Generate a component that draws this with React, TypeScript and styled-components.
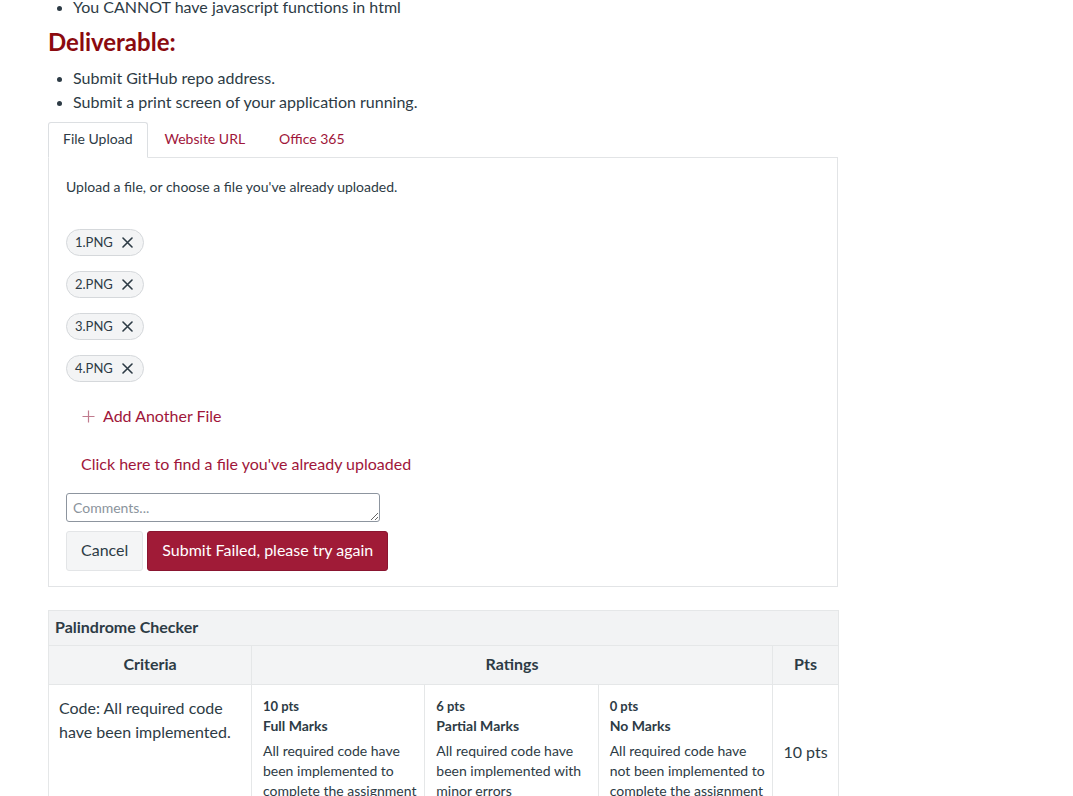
import React from "react";
import styled, { createGlobalStyle } from "styled-components";

const Global = createGlobalStyle`
  html, body { margin: 0; padding: 0; background: #fff; }
  body { font-family: Lato, "Open Sans", sans-serif; color: #2d3b45; overflow: hidden; }
  * { box-sizing: border-box; }
`;

const Page = styled.div`
  padding-left: 48px;
  width: 838px;
  margin-top: -5px;
`;

const Bullets = styled.ul<{ $mt?: number }>`
  margin: ${(p) => p.$mt ?? 0}px 0 0 0;
  padding-left: 25px;
  font-size: 16px;
  line-height: 24px;
  li::marker { font-size: 14px; }
`;

const Heading = styled.h3`
  margin: 8px 0 0 0;
  font-size: 24px;
  line-height: 30px;
  font-weight: 700;
  color: #8b0a0f;
`;

const Tabs = styled.div`
  display: flex;
  margin-top: 8px;
  position: relative;
  z-index: 1;
`;

const Tab = styled.div<{ $active?: boolean }>`
  height: 36px;
  display: flex;
  align-items: center;
  font-size: 14px;
  padding: 0 ${(p) => (p.$active ? 14 : 16)}px 3px;
  border: 1px solid ${(p) => (p.$active ? "#dcdfe2" : "transparent")};
  border-bottom-color: ${(p) => (p.$active ? "#fff" : "transparent")};
  border-radius: 3px 3px 0 0;
  background: ${(p) => (p.$active ? "#fff" : "transparent")};
  color: ${(p) => (p.$active ? "#2d3b45" : "#a0163a")};
`;

const Panel = styled.div`
  margin-top: -1px;
  border: 1px solid #e2e4e6;
  padding: 19px 17px 15px 17px;
`;

const Intro = styled.div`
  font-size: 14px;
  line-height: 20px;
`;

const Chips = styled.div`
  display: flex;
  flex-direction: column;
  align-items: flex-start;
  gap: 15px;
  margin-top: 32px;
`;

const Chip = styled.div`
  height: 27px;
  width: 78px;
  display: flex;
  align-items: center;
  justify-content: space-between;
  padding: 0 10px 0 8px;
  border: 1px solid #d5d8db;
  border-radius: 14px;
  background: #f3f4f5;
  font-size: 13px;
  color: #2d3b45;
  span { margin-top: -2px; }
`;

const LinkRow = styled.div<{ $mt: number; $pl: number }>`
  margin-top: ${(p) => p.$mt}px;
  padding-left: ${(p) => p.$pl}px;
  display: flex;
  align-items: center;
  gap: 8px;
  font-size: 16px;
  line-height: 24px;
  color: #a0163a;
`;

const Comments = styled.textarea`
  display: block;
  margin-top: 17px;
  width: 314px;
  height: 29px;
  border: 1px solid #8d959f;
  border-radius: 3px;
  padding: 4px 6px;
  font-family: Lato, sans-serif;
  font-size: 14px;
  line-height: 19px;
  color: #2d3b45;
  overflow-y: scroll;
  &::placeholder { color: #8b949c; }
`;

const Buttons = styled.div`
  display: flex;
  gap: 4px;
  margin-top: 9px;
`;

const Button = styled.button<{ $primary?: boolean }>`
  height: 40px;
  padding: 0 14px 3px;
  border-radius: 3px;
  border: 1px solid ${(p) => (p.$primary ? "#8a1530" : "#e3e5e7")};
  background: ${(p) => (p.$primary ? "#a01b37" : "#f4f5f6")};
  color: ${(p) => (p.$primary ? "#fff" : "#2d3b45")};
  font-family: Lato, sans-serif;
  font-size: 16px;
`;

const Rubric = styled.table`
  margin-top: 23px;
  width: 790px;
  border-collapse: collapse;
  table-layout: fixed;
  border: 1px solid #e5e7e8;
`;

const Caption = styled.th`
  height: 35px;
  background: #f2f3f4;
  text-align: left;
  padding: 0 6px 3px;
  font-size: 16px;
  font-weight: 700;
  border: 1px solid #e5e7e8;
`;

const HeadCell = styled.th`
  height: 39px;
  background: #f3f4f5;
  font-size: 16px;
  font-weight: 700;
  text-align: center;
  padding: 0 0 3px;
  border: 1px solid #e5e7e8;
`;

const Cell = styled.td<{ $center?: boolean }>`
  border: 1px solid #e5e7e8;
  vertical-align: ${(p) => (p.$center ? "middle" : "top")};
  text-align: ${(p) => (p.$center ? "center" : "left")};
  padding: ${(p) => (p.$center ? "0" : "11px 10px 17px 10px")};
  font-size: 16px;
  line-height: 24px;
`;

const RatingCell = styled.td`
  border: 1px solid #e5e7e8;
  padding: 0;
  vertical-align: top;
`;

const RatingGrid = styled.div`
  display: grid;
  grid-template-columns: 1fr 1fr 1fr;
  height: 100%;
`;

const Rating = styled.div<{ $last?: boolean }>`
  padding: 11px 4px 18px 11px;
  border-right: ${(p) => (p.$last ? "none" : "1px solid #e5e7e8")};
`;

const Points = styled.div`
  font-size: 13px;
  font-weight: 700;
  line-height: 20px;
`;

const RatingTitle = styled.div`
  font-size: 14px;
  font-weight: 700;
  line-height: 20px;
`;

const RatingDesc = styled.div`
  margin-top: 5px;
  font-size: 14px;
  line-height: 20px;
`;

const XIcon = () => (
  <svg width="11" height="11" viewBox="0 0 11 11">
    <path d="M1 1L10 10M10 1L1 10" stroke="#2d3b45" strokeWidth="1.6" strokeLinecap="round" />
  </svg>
);

const PlusIcon = () => (
  <svg width="13" height="13" viewBox="0 0 13 13">
    <path d="M6.5 0.5V12.5M0.5 6.5H12.5" stroke="#c07b8e" strokeWidth="1.2" />
  </svg>
);

const ratings = [
  { pts: "10 pts", title: "Full Marks", desc: "All required code have been implemented to complete the assignment" },
  { pts: "6 pts", title: "Partial Marks", desc: "All required code have been implemented with minor errors" },
  { pts: "0 pts", title: "No Marks", desc: "All required code have not been implemented to complete the assignment" },
];

export default function App() {
  return (
    <>
      <Global />
      <Page>
        <Bullets>
          <li>You CANNOT have javascript functions in html</li>
        </Bullets>
        <Heading>Deliverable:</Heading>
        <Bullets $mt={9}>
          <li>Submit GitHub repo address.</li>
          <li>Submit a print screen of your application running.</li>
        </Bullets>
        <Tabs>
          <Tab $active>File Upload</Tab>
          <Tab>Website URL</Tab>
          <Tab>Office 365</Tab>
        </Tabs>
        <Panel>
          <Intro>Upload a file, or choose a file you've already uploaded.</Intro>
          <Chips>
            {["1.PNG", "2.PNG", "3.PNG", "4.PNG"].map((f) => (
              <Chip key={f}>
                <span>{f}</span>
                <XIcon />
              </Chip>
            ))}
          </Chips>
          <LinkRow $mt={22} $pl={16}>
            <PlusIcon />
            <span>Add Another File</span>
          </LinkRow>
          <LinkRow $mt={24} $pl={15}>
            Click here to find a file you've already uploaded
          </LinkRow>
          <Comments placeholder="Comments..." rows={1} />
          <Buttons>
            <Button>Cancel</Button>
            <Button $primary>Submit Failed, please try again</Button>
          </Buttons>
        </Panel>
        <Rubric>
          <colgroup>
            <col style={{ width: 203 }} />
            <col style={{ width: 521 }} />
            <col style={{ width: 66 }} />
          </colgroup>
          <thead>
            <tr>
              <Caption colSpan={3}>Palindrome Checker</Caption>
            </tr>
            <tr>
              <HeadCell>Criteria</HeadCell>
              <HeadCell>Ratings</HeadCell>
              <HeadCell>Pts</HeadCell>
            </tr>
          </thead>
          <tbody>
            <tr>
              <Cell>Code: All required code have been implemented.</Cell>
              <RatingCell>
                <RatingGrid>
                  {ratings.map((r, i) => (
                    <Rating key={r.pts} $last={i === ratings.length - 1}>
                      <Points>{r.pts}</Points>
                      <RatingTitle>{r.title}</RatingTitle>
                      <RatingDesc>{r.desc}</RatingDesc>
                    </Rating>
                  ))}
                </RatingGrid>
              </RatingCell>
              <Cell $center>10 pts</Cell>
            </tr>
          </tbody>
        </Rubric>
      </Page>
    </>
  );
}
